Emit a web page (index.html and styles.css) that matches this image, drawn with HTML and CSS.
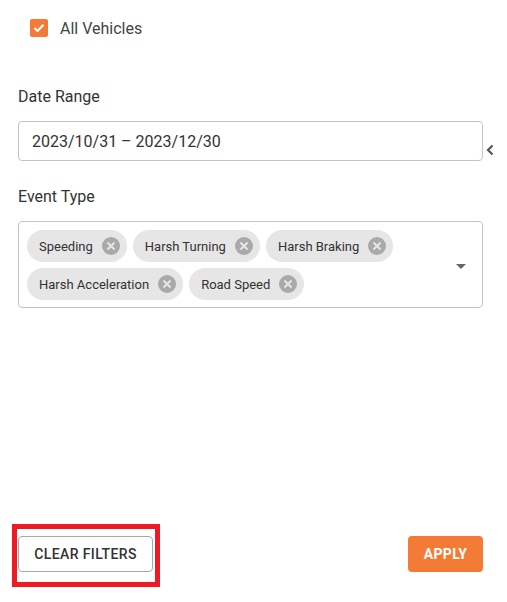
FILE: index.html
```html
<!DOCTYPE html>
<html lang="en">

<head>
  <meta charset="UTF-8">
  <meta name="viewport" content="width=device-width, initial-scale=1.0">
  <title>Filters</title>
  <link rel="stylesheet" href="styles.css">
</head>

<body>
  <div class="panel">
    <label class="vehicles">
      <span class="check">
        <svg width="12" height="10" viewBox="0 0 12 10"><polyline points="1.5,5 4.5,8 10.5,1.8" fill="none" stroke="#fff" stroke-width="2"/></svg>
      </span>
      All Vehicles
    </label>

    <p class="field-label">Date Range</p>
    <div class="date-row">
      <div class="date-input">2023/10/31 – 2023/12/30</div>
      <svg class="chev" width="10" height="12" viewBox="0 0 10 12"><polyline points="7.5,1.5 3,6 7.5,10.5" fill="none" stroke="#555" stroke-width="2.2"/></svg>
    </div>

    <p class="field-label event-label">Event Type</p>
    <div class="select">
      <div class="chips">
        <span class="chip">Speeding <span class="del"></span></span>
        <span class="chip">Harsh Turning <span class="del"></span></span>
        <span class="chip">Harsh Braking <span class="del"></span></span>
        <span class="chip">Harsh Acceleration <span class="del"></span></span>
        <span class="chip">Road Speed <span class="del"></span></span>
      </div>
      <span class="arrow"></span>
    </div>

    <div class="actions">
      <span class="marked">
        <button class="btn-clear">CLEAR FILTERS</button>
      </span>
      <button class="btn-apply">APPLY</button>
    </div>
  </div>
</body>

</html>
```

FILE: styles.css
```css
body {
  margin: 0;
  font-family: Roboto, "Liberation Sans", sans-serif;
  color: #333;
  background: #fff;
}

.panel {
  height: 602px;
  box-sizing: border-box;
  padding: 19px 24px 30px 18px;
  display: flex;
  flex-direction: column;
}

.vehicles {
  display: flex;
  align-items: center;
  gap: 12px;
  margin-left: 12px;
  height: 18px;
  font-size: 16px;
  color: #444;
}

.check {
  width: 18px;
  height: 18px;
  border-radius: 2px;
  background: #f47b36;
  display: flex;
  align-items: center;
  justify-content: center;
}

.field-label {
  margin: 50px 0 0;
  font-size: 16px;
  line-height: 20px;
  color: #333;
}

.event-label {
  margin-top: 26px;
}

.date-row {
  display: flex;
  align-items: flex-end;
  margin-top: 14px;
}

.date-input {
  width: 465px;
  height: 40px;
  box-sizing: border-box;
  border: 1px solid #c4c4c4;
  border-radius: 4px;
  padding: 0 13px;
  display: flex;
  align-items: center;
  font-size: 16px;
  color: #333;
  flex-shrink: 0;
}

.chev {
  margin: 0 0 5px 2px;
  flex-shrink: 0;
}

.select {
  width: 465px;
  box-sizing: border-box;
  margin-top: 14px;
  border: 1px solid #c4c4c4;
  border-radius: 4px;
  padding: 8px 16px 7px 8px;
  display: flex;
  align-items: center;
}

.chips {
  flex: 1;
  display: flex;
  flex-wrap: wrap;
  gap: 6px 6px;
  padding-right: 50px;
}

.chip {
  height: 32px;
  border-radius: 16px;
  background: #e6e6e6;
  display: inline-flex;
  align-items: center;
  gap: 9px;
  padding: 0 7px 0 12px;
  font-size: 13px;
  color: #333;
}

.del {
  width: 18px;
  height: 18px;
  border-radius: 50%;
  background: #a9a9a9;
  position: relative;
}

.del::before,
.del::after {
  content: "";
  position: absolute;
  left: 4px;
  top: 8px;
  width: 10px;
  height: 2px;
  background: #e6e6e6;
  transform: rotate(45deg);
}

.del::after {
  transform: rotate(-45deg);
}

.arrow {
  width: 0;
  height: 0;
  border-left: 5px solid transparent;
  border-right: 5px solid transparent;
  border-top: 5px solid #666;
  margin-top: 2px;
}

.actions {
  margin-top: auto;
  display: flex;
  justify-content: space-between;
  align-items: center;
}

.marked {
  position: relative;
  display: inline-flex;
}

/* red highlight box from the screenshot */
.marked::after {
  content: "";
  position: absolute;
  top: -12px;
  left: -6px;
  right: -7px;
  bottom: -15px;
  border: 5px solid #ed1c24;
}

button {
  font-family: Roboto, "Liberation Sans", sans-serif;
  font-size: 14px;
  height: 36px;
  border-radius: 4px;
  cursor: pointer;
}

.btn-clear {
  width: 135px;
  background: #fff;
  border: 1px solid #a8a8a8;
  color: #333;
  font-weight: 500;
  letter-spacing: 0.4px;
}

.btn-apply {
  width: 75px;
  background: #f47b36;
  border: none;
  color: #fff;
  font-weight: 700;
  letter-spacing: 0.3px;
}
```
